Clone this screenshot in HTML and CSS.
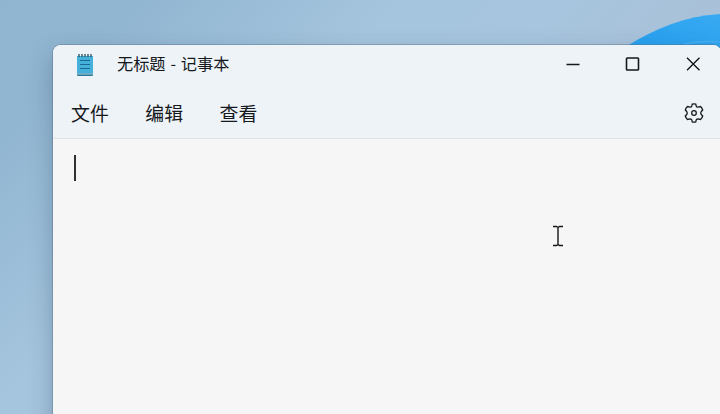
FILE: index.html
```html
<!DOCTYPE html>
<html lang="zh-CN">

<head>
    <meta charset="UTF-8">
    <meta name="viewport" content="width=device-width, initial-scale=1.0">
    <title>无标题 - 记事本</title>
    <link rel="stylesheet" href="styles.css">
</head>

<body>
    <div class="desktop">
        <svg class="bloom" width="100" height="40" viewBox="0 0 100 40">
            <defs>
                <linearGradient id="petal" x1="0" y1="1" x2="1" y2="0">
                    <stop offset="0" stop-color="#249fee" />
                    <stop offset="1" stop-color="#38a9f2" />
                </linearGradient>
            </defs>
            <path d="M7 33C36 15 66 3 100 1V40H7Z" fill="url(#petal)" />
            <path d="M64 31Q82 27 100 29" fill="none" stroke="#49b2f4" stroke-width="1.2" />
        </svg>

        <div class="window">
            <header class="title-bar">
                <svg class="app-icon" width="18" height="24" viewBox="0 0 18 24">
                    <rect x="1" y="3" width="16" height="20" rx="1" fill="#287a9d" />
                    <rect x="1" y="3" width="16" height="17.500" fill="#45b0da" />
                    <path d="M1 21h16" stroke="#a7cbd7" />
                    <path d="M4 7.500h10M4 11.500h10M4 15.500h10" stroke="#186b92" stroke-width="1.200" />
                    <path d="M3 1v3M6 1v3M9 1v3M12 1v3M15 1v3" stroke="#244b5a" stroke-width="1.300" />
                </svg>
                <h1>无标题 - 记事本</h1>
                <div class="controls">
                    <button type="button" aria-label="最小化">
                        <svg width="16" height="16" viewBox="0 0 16 16"><path d="M1.500 8.500h13" /></svg>
                    </button>
                    <button type="button" aria-label="最大化">
                        <svg width="16" height="16" viewBox="0 0 16 16"><rect x="1.500" y="2" width="12" height="12" rx="0.800" /></svg>
                    </button>
                    <button type="button" aria-label="关闭">
                        <svg width="16" height="16" viewBox="0 0 16 16"><path class="thin" d="M2 1.800l12.500 12.500M14.500 1.800L2 14.300" /></svg>
                    </button>
                </div>
            </header>

            <nav class="menu-bar">
                <button type="button">文件</button>
                <button type="button">编辑</button>
                <button type="button">查看</button>
                <button type="button" class="settings" aria-label="设置">
                    <svg width="20" height="20" viewBox="0 0 20 20">
                        <path d="M8.200 1.200Q10 .400 11.800 1.200L12.200 3.100Q12.600 4.300 13.800 4.200L16.500 3.500Q18.200 5 18.700 7L17.300 8.500Q16.300 10 17.300 11.500L18.700 13Q18.200 15 16.500 16.500L13.800 15.800Q12.600 15.700 12.200 16.900L11.800 18.800Q10 19.600 8.200 18.800L7.800 16.900Q7.400 15.700 6.200 15.800L3.500 16.500Q1.800 15 1.300 13L2.700 11.500Q3.700 10 2.700 8.500L1.300 7Q1.800 5 3.500 3.500L6.200 4.200Q7.400 4.300 7.800 3.100Z" />
                        <circle cx="10" cy="10" r="2.300" />
                    </svg>
                </button>
            </nav>

            <main class="editor">
                <div class="caret"></div>
            </main>
        </div>

        <svg class="pointer" width="12" height="22" viewBox="0 0 12 22">
            <path d="M1 1.500h3.500L6 2.500l1.500-1H11M6 2v18M1 20.500h3.500L6 19.500l1.500 1H11" />
        </svg>
    </div>
</body>

</html>
```
FILE: styles.css
```css
* {
    box-sizing: border-box;
}

body {
    margin: 0;
    overflow: hidden;
    font-family: "Noto Sans CJK SC", sans-serif;
    color: #15191d;
}

.desktop {
    position: relative;
    height: 414px;
    padding: 45px 0 0 53px;
    overflow: hidden;
    background: linear-gradient(135deg, #8fb5d0 0%, #91b6d1 12%, #a5c4dd 35%, #a7c5de 50%, #a9c0d7 68%, #a9c0d7 100%);
}

.bloom {
    position: absolute;
    top: 13px;
    right: 0;
}

.window {
    position: relative;
    width: 668px;
    height: 400px;
    border-radius: 8px;
    background: #f6f6f6;
    box-shadow: 0 0 0 1px rgba(90, 110, 130, 0.4), 0 10px 24px rgba(30, 60, 90, 0.32);
    overflow: hidden;
}

.title-bar {
    display: flex;
    align-items: center;
    height: 39px;
    padding-left: 23px;
    background: #eef3f7;
}

.title-bar h1 {
    margin: 0 0 3px 23px;
    font-size: 16.2px;
    font-weight: 400;
    line-height: 24px;
    word-spacing: 1.2px;
    white-space: pre;
}

button {
    padding: 0;
    border: none;
    background: none;
    font: inherit;
    color: inherit;
}

.controls {
    display: flex;
    margin: 0 -2px 2px auto;
}

.controls button {
    display: flex;
    align-items: center;
    justify-content: center;
    width: 60px;
    height: 37px;
}

.controls svg,
.settings svg {
    fill: none;
    stroke: #15191d;
    stroke-width: 1.6;
}

.controls .thin {
    stroke-width: 1.4;
}

.menu-bar {
    display: flex;
    align-items: center;
    gap: 36.5px;
    height: 55px;
    padding: 2px 17px 0 18px;
    border-bottom: 1px solid #dde3e9;
    background: #eef3f7;
    font-size: 18.9px;
}

.menu-bar .settings {
    display: flex;
    margin: 1px 0 0 auto;
}

.settings svg {
    stroke-width: 1.3;
}

.editor {
    padding: 16px 21px;
}

.caret {
    width: 2px;
    height: 26px;
    background: #303030;
}

/* text cursor drawn over the editor */
.pointer {
    position: absolute;
    top: 225px;
    left: 552px;
    fill: none;
    stroke: #161616;
    stroke-width: 1.4;
}
```
